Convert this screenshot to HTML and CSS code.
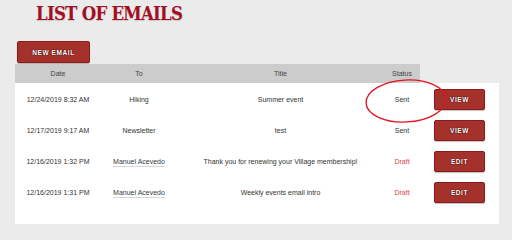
FILE: index.html
```html
<!DOCTYPE html>
<html lang="en">
<head>
<meta charset="utf-8">
<title>List of Emails</title>
<link rel="stylesheet" href="styles.css">
</head>
<body>
<div class="page">
  <h1 class="title">LIST OF EMAILS</h1>
  <div class="toolbar">
    <button class="btn btn-new">NEW EMAIL</button>
  </div>
  <div class="emails">
    <div class="thead">
      <div class="cell">Date</div>
      <div class="cell">To</div>
      <div class="cell">Title</div>
      <div class="cell">Status</div>
    </div>
    <div class="tbody">
      <div class="row">
        <div class="cell">12/24/2019 8:32 AM</div>
        <div class="cell">Hiking</div>
        <div class="cell">Summer event</div>
        <div class="cell status">Sent</div>
        <div class="cell action"><button class="btn btn-row">VIEW</button></div>
      </div>
      <div class="row">
        <div class="cell">12/17/2019 9:17 AM</div>
        <div class="cell">Newsletter</div>
        <div class="cell">test</div>
        <div class="cell status">Sent</div>
        <div class="cell action"><button class="btn btn-row">VIEW</button></div>
      </div>
      <div class="row">
        <div class="cell">12/16/2019 1:32 PM</div>
        <div class="cell"><a class="recipient" href="#">Manuel Acevedo</a></div>
        <div class="cell">Thank you for renewing your Village membership!</div>
        <div class="cell status draft">Draft</div>
        <div class="cell action"><button class="btn btn-row">EDIT</button></div>
      </div>
      <div class="row">
        <div class="cell">12/16/2019 1:31 PM</div>
        <div class="cell"><a class="recipient" href="#">Manuel Acevedo</a></div>
        <div class="cell">Weekly events email intro</div>
        <div class="cell status draft">Draft</div>
        <div class="cell action"><button class="btn btn-row">EDIT</button></div>
      </div>
    </div>
  </div>
  <svg class="annotation" width="88" height="50" viewBox="0 0 88 50">
    <ellipse cx="44" cy="24" rx="40" ry="21" transform="rotate(-3 44 24)" fill="none" stroke="#e5121f" stroke-width="1.3"/>
  </svg>
</div>
</body>
</html>
```

FILE: styles.css
```css
html, body {
  margin: 0;
  padding: 0;
}
body {
  background: #ebebeb;
  font-family: "Liberation Sans", Arial, sans-serif;
  color: #333333;
  width: 512px;
}
.page {
  position: relative;
  padding-left: 15px;
}
.title {
  margin: 0 0 13px 0;
  padding-left: 21px;
  font-family: "DejaVu Serif", "Liberation Serif", serif;
  font-stretch: condensed;
  font-weight: bold;
  font-size: 18.5px;
  line-height: 28px;
  color: #a40f25;
  letter-spacing: -0.8px;
  text-shadow: 0 1px 1px rgba(0, 0, 0, 0.15);
}
.toolbar {
  height: 23px;
  padding-left: 2px;
}
.btn {
  display: block;
  background: #a4312b;
  border: 1px solid #8c1c1c;
  border-radius: 2px;
  box-shadow: 0 1px 1px rgba(0, 0, 0, 0.25);
  color: #ffffff;
  font-family: "Liberation Sans", Arial, sans-serif;
  font-weight: bold;
  font-size: 6.5px;
  letter-spacing: 0.6px;
  text-shadow: 0 0 1px #3a0000, 0 0 1px #3a0000;
  padding: 0;
  cursor: pointer;
}
.btn-new {
  width: 73px;
  height: 22px;
}
.emails {
  width: 484px;
}
.thead {
  display: grid;
  grid-template-columns: 86px 76px 207px 36px;
  width: 405px;
  height: 19px;
  background: #cccccc;
  font-size: 7px;
  color: #444444;
}
.thead .cell {
  display: flex;
  align-items: center;
  justify-content: center;
}
.tbody {
  background: #ffffff;
  padding-top: 1px;
  min-height: 140px;
}
.row {
  display: grid;
  grid-template-columns: 86px 76px 207px 36px 79px;
  height: 31px;
  font-size: 7px;
  color: #333333;
}
.row .cell {
  display: flex;
  align-items: center;
  justify-content: center;
  white-space: nowrap;
}
.recipient {
  color: #333a44;
  text-decoration: none;
  border-bottom: 1px solid #d6d6d6;
  line-height: 9px;
}
.status.draft {
  color: #e84050;
}
.btn-row {
  width: 51px;
  height: 21px;
}
.annotation {
  position: absolute;
  left: 362px;
  top: 77px;
}
```
